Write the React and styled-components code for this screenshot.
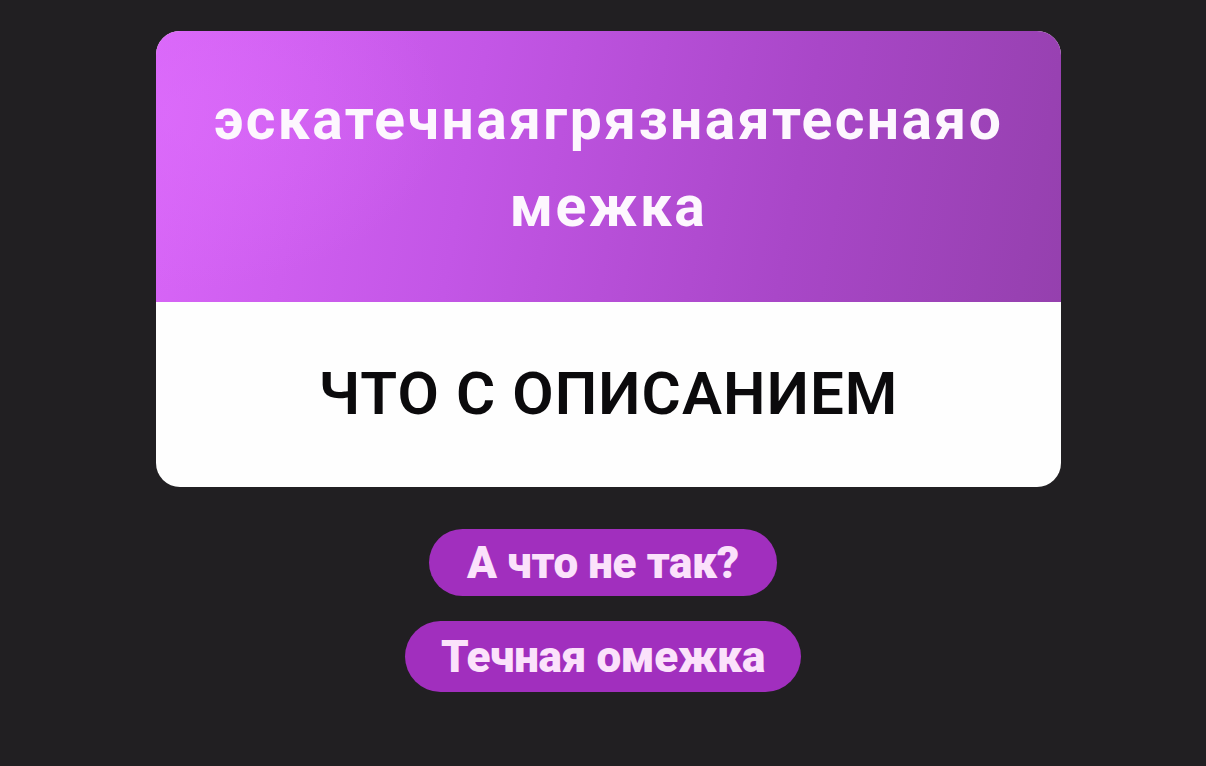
import React from "react";
import styled, { createGlobalStyle } from "styled-components";

const Global = createGlobalStyle`
  html, body {
    margin: 0;
    padding: 0;
    background: #211f22;
  }
  body {
    font-family: Roboto, "Noto Sans", "Liberation Sans", sans-serif;
  }
`;

const Page = styled.main`
  width: 1206px;
  height: 766px;
  box-sizing: border-box;
  padding-top: 31px;
  display: flex;
  flex-direction: column;
  align-items: center;
  background: #211f22;
`;

const Card = styled.section`
  width: 905px;
  margin-left: 11px;
  border-radius: 24px;
  overflow: hidden;
  display: flex;
  flex-direction: column;
  background: #fefefe;
`;

const Header = styled.div`
  height: 271px;
  box-sizing: border-box;
  display: flex;
  align-items: center;
  justify-content: center;
  padding: 0 30px 8px;
  background:
    radial-gradient(ellipse 420px 260px at 0% 30%, rgba(222, 110, 252, 0.55), rgba(222, 110, 252, 0) 70%),
    linear-gradient(100deg, #d966f8 0%, #c356e6 35%, #a947c8 70%, #9540ae 100%);
`;

const Title = styled.h1`
  margin: 0;
  font-family: Roboto, "Noto Sans", sans-serif;
  font-weight: 700;
  font-size: 57px;
  line-height: 87px;
  letter-spacing: 2.4px;
  color: #fdf7fe;
  text-align: center;
  word-break: break-all;
  max-width: 820px;
`;

const Body = styled.div`
  height: 185px;
  display: flex;
  align-items: center;
  justify-content: center;
  padding-bottom: 2px;
  box-sizing: border-box;
`;

const Caption = styled.h2`
  margin: 0;
  font-family: Roboto, "Noto Sans", sans-serif;
  font-weight: 600;
  font-size: 60px;
  line-height: 1;
  letter-spacing: 1.1px;
  color: #0b0a0c;
`;

const Actions = styled.div`
  margin-top: 42px;
  display: flex;
  flex-direction: column;
  align-items: center;
  gap: 25px;
`;

const Pill = styled.button`
  border: none;
  cursor: pointer;
  height: ${(p) => p.$h}px;
  padding: 0 ${(p) => p.$pad}px;
  border-radius: 999px;
  background: #a12fbe;
  color: #fbe2fb;
  font-family: Roboto, "Noto Sans", sans-serif;
  font-weight: 900;
  font-size: 44px;
  letter-spacing: -0.4px;
  line-height: 1;
  display: flex;
  align-items: center;
  justify-content: center;
`;

export default function App() {
  return (
    <>
      <Global />
      <Page>
        <Card>
          <Header>
            <Title>эскатечнаягрязнаятеснаяо межка</Title>
          </Header>
          <Body>
            <Caption>ЧТО С ОПИСАНИЕМ</Caption>
          </Body>
        </Card>
        <Actions>
          <Pill $h={67} $pad={38}>А что не так?</Pill>
          <Pill $h={71} $pad={36}>Течная омежка</Pill>
        </Actions>
      </Page>
    </>
  );
}
